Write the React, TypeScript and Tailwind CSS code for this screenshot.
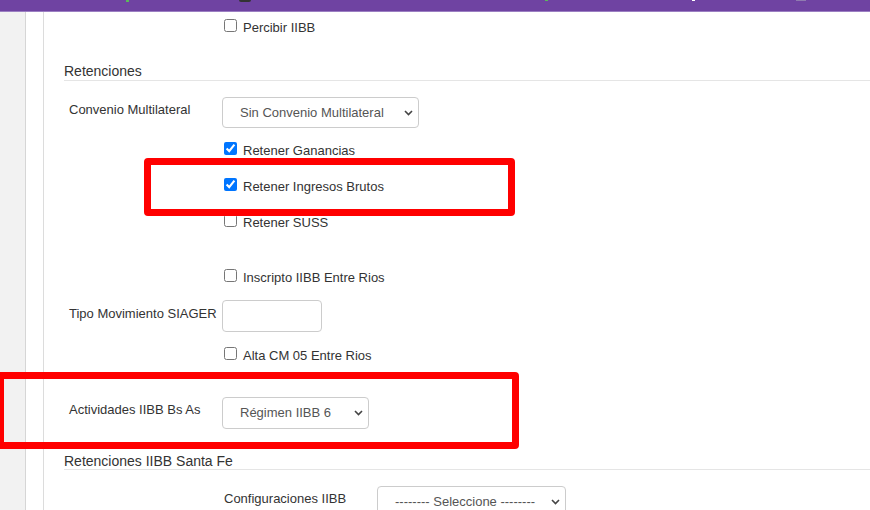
import React from "react";

function Check({ label, checked }: { label: string; checked?: boolean }) {
  return (
    <label className="flex items-start h-[23px] pl-[160px]">
      <input type="checkbox" defaultChecked={checked} className="w-[13px] h-[13px] m-0 mt-[3px] shrink-0" />
      <span className="ml-[6px] leading-[23px] text-[13px] text-[#333]">{label}</span>
    </label>
  );
}

function Chevron() {
  return (
    <svg width="9" height="6" viewBox="0 0 9 6" className="shrink-0">
      <path d="M1 1l3.5 3.5L8 1" fill="none" stroke="#444" strokeWidth="1.6" />
    </svg>
  );
}

function Select({ value, className }: { value: string; className: string }) {
  return (
    <div
      className={
        "flex items-center justify-between border border-[#ccc] rounded-[4px] bg-white pl-[17px] pr-[5px] text-[13px] text-[#555] " +
        className
      }
    >
      <span>{value}</span>
      <Chevron />
    </div>
  );
}

export default function App() {
  return (
    <div className="relative w-full h-[510px] overflow-hidden bg-white font-['Liberation_Sans',Arial,sans-serif]">
      {/* barra superior (iconos cortados) */}
      <div className="relative h-[12px] bg-[#6f43a2] border-b border-[#9b7fc2]">
        <span className="absolute left-[126px] top-0 w-[3px] h-[2px] bg-[#5cb85c]" />
        <span className="absolute left-[239px] top-0 w-[12px] h-[2px] bg-[#333] rounded-b-[2px]" />
        <span className="absolute left-[545px] top-0 w-[3px] h-[1px] bg-[#5cb85c]" />
        <span className="absolute left-[692px] top-0 w-[3px] h-[1px] bg-white" />
        <span className="absolute left-[796px] top-0 w-[10px] h-[1px] bg-[#8f7bb0]" />
      </div>

      <div className="flex h-[498px]">
        <div className="w-[26px] shrink-0 bg-[#f2f2f2] border-r border-[#d6d6d6]" />
        <div className="w-[18px] shrink-0 bg-white border-r border-[#dcdcdc]" />

        <div className="flex-1 flex flex-col pl-[20px]">
          <div className="mt-[4px]">
            <Check label="Percibir IIBB" />
          </div>

          <div className="mt-[24px] text-[14px] leading-[17px] text-[#333] border-b border-[#e5e5e5]">Retenciones</div>

          <div className="mt-[16px] flex items-start">
            <div className="w-[158px] pl-[5px] mt-[3px] text-[13px] leading-[20px] text-[#333]">Convenio Multilateral</div>
            <Select value="Sin Convenio Multilateral" className="w-[197px] h-[31px]" />
          </div>

          <div className="mt-[11px]">
            <Check label="Retener Ganancias" checked />
          </div>
          <div className="mt-[13px]">
            <Check label="Retener Ingresos Brutos" checked />
          </div>
          <div className="mt-[13px]">
            <Check label="Retener SUSS" />
          </div>
          <div className="mt-[32px]">
            <Check label="Inscripto IIBB Entre Rios" />
          </div>

          <div className="mt-[11px] flex items-start">
            <div className="w-[158px] pl-[5px] mt-[4px] text-[13px] leading-[20px] text-[#333]">Tipo Movimiento SIAGER</div>
            <input type="text" className="w-[100px] h-[32px] border border-[#ccc] rounded-[4px] bg-white" />
          </div>

          <div className="mt-[12px]">
            <Check label="Alta CM 05 Entre Rios" />
          </div>

          <div className="mt-[30px] flex items-start">
            <div className="w-[158px] pl-[5px] mt-[3px] text-[13px] leading-[20px] text-[#333]">Actividades IIBB Bs As</div>
            <Select value="Régimen IIBB 6" className="w-[147px] h-[32px]" />
          </div>

          <div className="mt-[24px] text-[14px] leading-[16px] text-[#333] border-b border-[#e5e5e5]">Retenciones IIBB Santa Fe</div>

          <div className="mt-[16px] flex items-start pl-[160px]">
            <div className="w-[153px] mt-[3px] text-[13px] leading-[20px] text-[#333]">Configuraciones IIBB</div>
            <Select value="-------- Seleccione --------" className="w-[189px] h-[32px]" />
          </div>
        </div>
      </div>

      {/* recuadros rojos */}
      <div className="absolute left-[144px] top-[158px] w-[371px] h-[58px] border-[7px] border-[#ff0000] rounded-[4px]" />
      <div className="absolute left-[-3px] top-[372px] w-[522px] h-[77px] border-[7px] border-[#ff0000] rounded-[4px]" />
    </div>
  );
}
